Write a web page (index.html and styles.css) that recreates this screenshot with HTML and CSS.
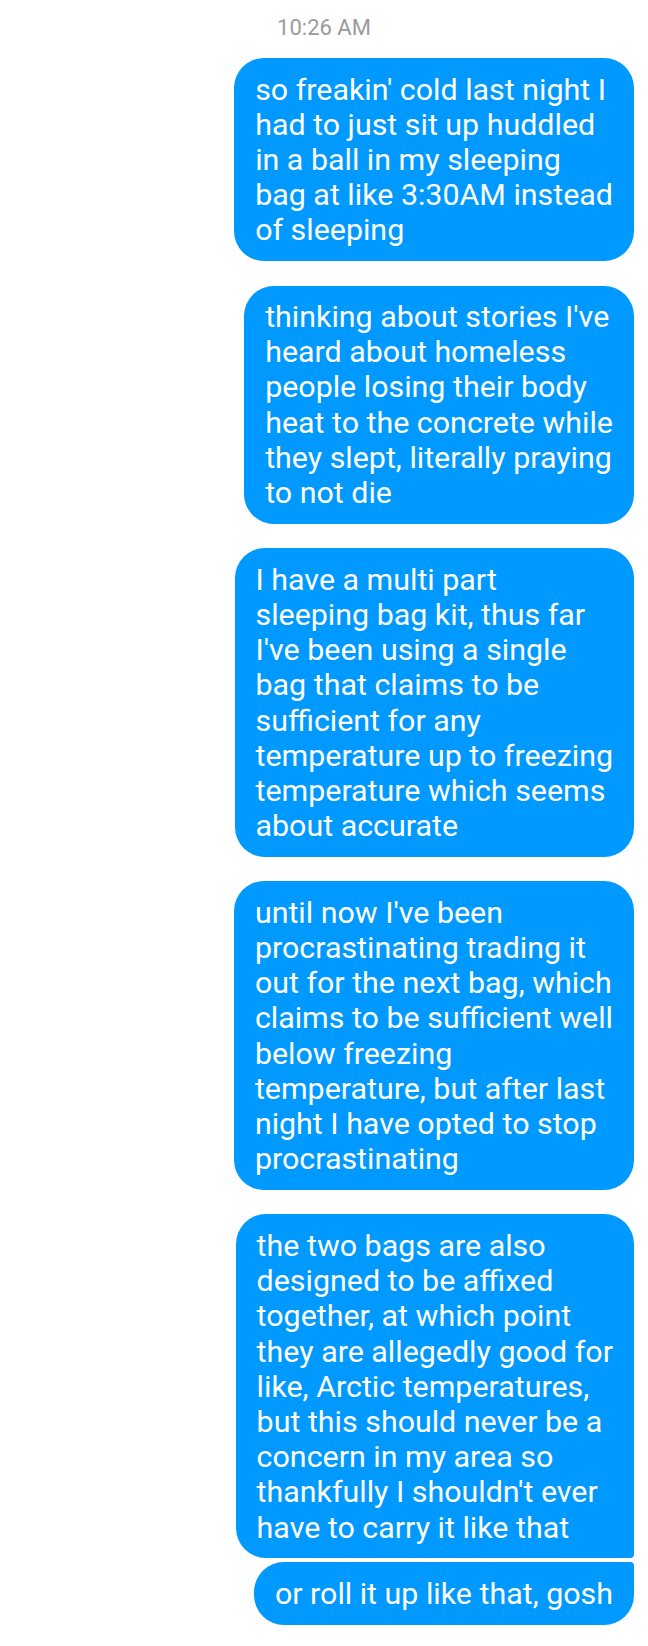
FILE: index.html
```html
<!DOCTYPE html>
<html lang="en">
<head>
<meta charset="utf-8">
<title>Messages</title>
<link rel="stylesheet" href="styles.css">
</head>
<body>
<main class="thread">
  <div class="timestamp">10:26 AM</div>
  <div class="messages">
    <div class="bubble">so freakin' cold last night I<br>had to just sit up huddled<br>in a ball in my sleeping<br>bag at like 3:30AM instead<br>of sleeping</div>
    <div class="bubble">thinking about stories I've<br>heard about homeless<br>people losing their body<br>heat to the concrete while<br>they slept, literally praying<br>to not die</div>
    <div class="bubble">I have a multi part<br>sleeping bag kit, thus far<br>I've been using a single<br>bag that claims to be<br>sufficient for any<br>temperature up to freezing<br>temperature which seems<br>about accurate</div>
    <div class="bubble">until now I've been<br>procrastinating trading it<br>out for the next bag, which<br>claims to be sufficient well<br>below freezing<br>temperature, but after last<br>night I have opted to stop<br>procrastinating</div>
    <div class="bubble bubble-first">the two bags are also<br>designed to be affixed<br>together, at which point<br>they are allegedly good for<br>like, Arctic temperatures,<br>but this should never be a<br>concern in my area so<br>thankfully I shouldn't ever<br>have to carry it like that</div>
    <div class="bubble bubble-last">or roll it up like that, gosh</div>
  </div>
</main>
</body>
</html>
```
FILE: styles.css
```css
* { box-sizing: border-box; }
html, body {
  margin: 0;
  padding: 0;
  background: #ffffff;
}
body {
  font-family: Roboto, "Noto Sans", "Liberation Sans", sans-serif;
}
.thread {
  display: flex;
  flex-direction: column;
  width: 648px;
}
.timestamp {
  margin-top: 15px;
  text-align: center;
  font-size: 22px;
  line-height: 26px;
  color: #9b9b9b;
}
.messages {
  display: flex;
  flex-direction: column;
  align-items: flex-end;
  padding: 17px 14px 0 0;
}
.bubble {
  background: #0099ff;
  color: #ffffff;
  font-size: 30.4px;
  line-height: 35.2px;
  white-space: nowrap;
  padding: 13.5px 21px;
  border-radius: 30px;
  margin-bottom: 24.5px;
}
.bubble-first {
  border-bottom-right-radius: 4px;
  margin-bottom: 4px;
}
.bubble-last {
  border-top-right-radius: 4px;
  margin-bottom: 0;
}
```
